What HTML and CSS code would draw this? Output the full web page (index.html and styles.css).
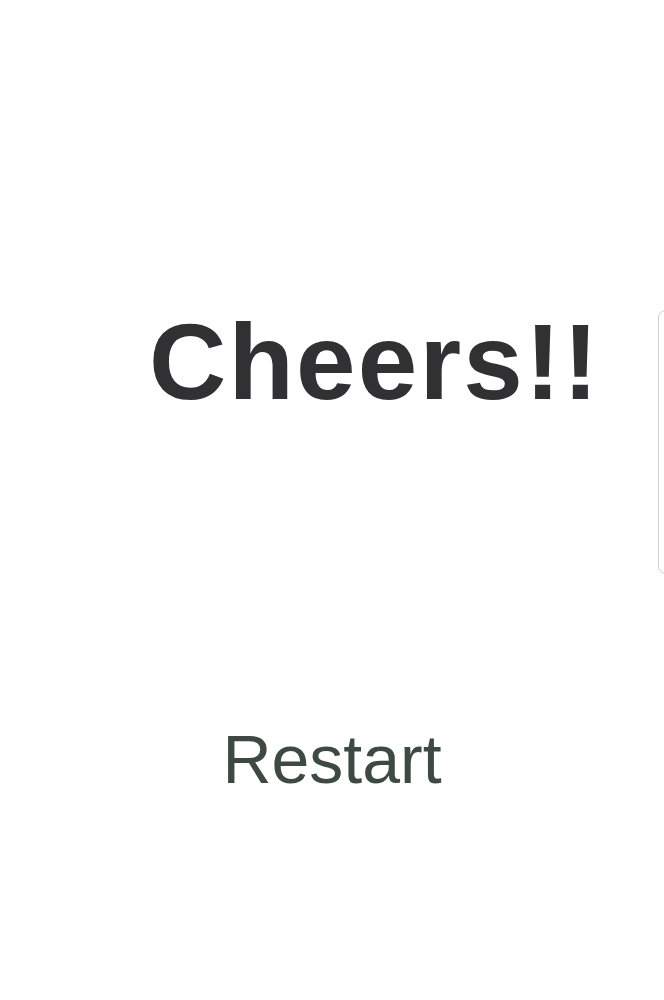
FILE: index.html
```html
<!DOCTYPE html>
<html lang="en">
<head>
<meta charset="utf-8">
<title>Cheers</title>
<link rel="stylesheet" href="styles.css">
</head>
<body>
<main class="screen">
  <h1 class="title">Cheers!!</h1>
  <button class="restart" type="button">Restart</button>
</main>
<div class="edge-handle"></div>
</body>
</html>
```
FILE: styles.css
```css
html, body {
  margin: 0;
  padding: 0;
  background: #ffffff;
}
body {
  width: 664px;
  height: 1000px;
  overflow: hidden;
  font-family: "Liberation Sans", Arial, sans-serif;
}
.screen {
  display: flex;
  flex-direction: column;
  padding-top: 309px;
}
.title {
  margin: 0;
  padding-left: 149px;
  font-size: 107px;
  line-height: 107px;
  font-weight: 700;
  color: #313032;
  letter-spacing: 2.2px;
}
.restart {
  align-self: center;
  margin: 309px 0 0 0;
  padding: 0;
  border: 0;
  background: transparent;
  font-family: "Liberation Sans", Arial, sans-serif;
  font-size: 68px;
  line-height: 68px;
  font-weight: 400;
  color: #3c4a43;
}
.edge-handle {
  position: fixed;
  top: 310px;
  left: 658px;
  width: 20px;
  height: 264px;
  border: 1px solid #cfcfcf;
  border-radius: 8px;
  box-sizing: border-box;
}
```
